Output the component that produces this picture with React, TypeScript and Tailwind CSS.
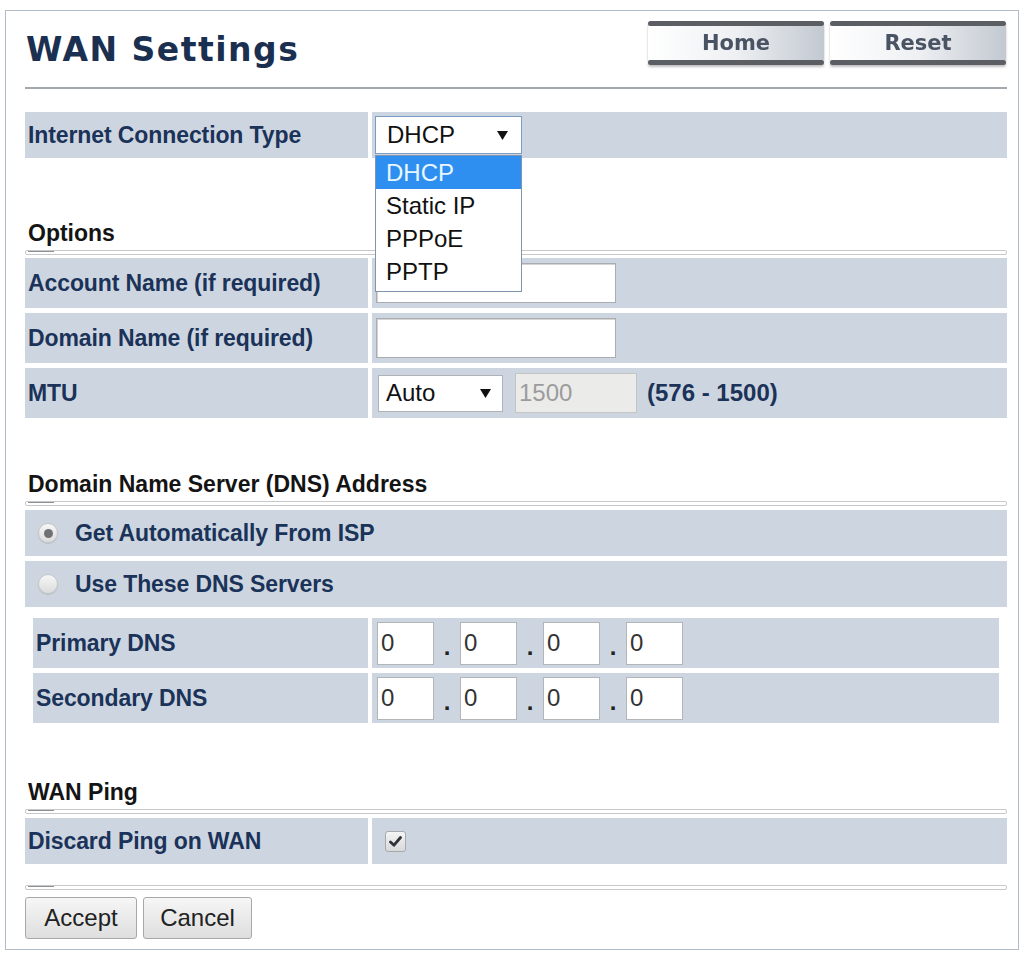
import React from "react";

const LABEL = "text-[23px] font-bold text-[#1b3259] leading-none tracking-[-0.1px]";
const CELL = "bg-[#cdd6e0]";

function Rule() {
  return (
    <div className="h-[5px] border border-[#c6c8ca] rounded-[2px] flex items-start">
      <div className="ml-[2px] w-[26px] h-px bg-[#8e9194]" />
    </div>
  );
}

function Heading({ text }: { text: string }) {
  return (
    <div className="h-[26px] leading-[26px] pl-[3px] text-[23px] font-bold text-[#141414]">{text}</div>
  );
}

function Row({ label, children, h = "h-[50px]" }: { label: string; children?: React.ReactNode; h?: string }) {
  return (
    <div className={`flex gap-[4px] ${h}`}>
      <div className={`w-[343px] shrink-0 ${CELL} flex items-center pl-[3px] ${LABEL}`}>{label}</div>
      <div className={`flex-1 ${CELL} flex items-center pl-[4px]`}>{children}</div>
    </div>
  );
}

function Arrow() {
  return (
    <svg width="11" height="9" viewBox="0 0 11 9">
      <polygon points="0,0 11,0 5.5,9" fill="#111" />
    </svg>
  );
}

function TextInput() {
  return <div className="w-[240px] h-[40px] bg-white border border-[#a9adb1] shadow-[inset_1px_1px_0_#d4d4d4]" />;
}

function Octet() {
  return (
    <div className="w-[57px] h-[43px] bg-white border border-[#b3b6b9] flex items-center pl-[3px] text-[24px] text-[#333] leading-none">
      0
    </div>
  );
}

function Dot() {
  return <div className="w-[26px] text-center text-[24px] font-bold text-[#222] leading-none pt-[8px]">.</div>;
}

function IpRow({ label }: { label: string }) {
  return (
    <div className="flex gap-[4px] h-[50px]">
      <div className={`w-[335px] shrink-0 ${CELL} flex items-center pl-[3px] ${LABEL}`}>{label}</div>
      <div className={`flex-1 ${CELL} flex items-center pl-[5px]`}>
        <Octet />
        <Dot />
        <Octet />
        <Dot />
        <Octet />
        <Dot />
        <Octet />
      </div>
    </div>
  );
}

function Radio({ checked }: { checked?: boolean }) {
  return (
    <div className="w-[20px] h-[20px] rounded-full border border-[#c4c7ca] bg-gradient-to-b from-[#f7f7f7] to-[#dcdcdc] shadow-[0_1px_1px_rgba(0,0,0,0.12)] flex items-center justify-center">
      {checked && <div className="w-[9px] h-[9px] rounded-full bg-[#6f7174]" />}
    </div>
  );
}

function RadioRow({ label, checked, h }: { label: string; checked?: boolean; h: string }) {
  return (
    <div className={`${h} ${CELL} flex items-center pl-[13px]`}>
      <Radio checked={checked} />
      <span className={`ml-[17px] ${LABEL}`}>{label}</span>
    </div>
  );
}

function TopButton({ text }: { text: string }) {
  return (
    <div className="w-[176px] h-[44px] flex flex-col drop-shadow-[0_2px_1px_rgba(0,0,0,0.25)]">
      <div className="h-[5px] rounded-full bg-[#5b5f64]" />
      <div
        className="flex-1 bg-gradient-to-r from-[#ffffff] via-[#eef0f3] to-[#c3c9d1] flex items-center justify-center text-[21px] font-bold text-[#4a5363] pt-[2px]"
        style={{ fontFamily: '"DejaVu Sans", Verdana, sans-serif' }}
      >
        {text}
      </div>
      <div className="h-[5px] rounded-full bg-[#5b5f64]" />
    </div>
  );
}

function FormButton({ text, w }: { text: string; w: string }) {
  return (
    <div
      className={`${w} h-[42px] rounded-[3px] border border-[#a8a8a8] bg-gradient-to-b from-[#f6f6f6] to-[#dedede] flex items-center justify-center text-[24px] text-[#222]`}
    >
      {text}
    </div>
  );
}

export default function App() {
  return (
    <div
      className="w-[1026px] h-[954px] bg-white pt-[10px] pl-[5px]"
      style={{ fontFamily: '"Liberation Sans", Arial, sans-serif' }}
    >
      <div className="w-[1014px] border border-[#aebbc8] pl-[19px] pr-[11px] pb-[10px]">
        {/* Header */}
        <div className="pt-[10px] flex justify-between items-start">
          <div
            className="mt-[10px] pl-[1px] leading-[38px] text-[33px] font-bold text-[#1b2f50] tracking-[1.5px]"
            style={{ fontFamily: '"DejaVu Sans", Verdana, sans-serif' }}
          >
            WAN Settings
          </div>
          <div className="flex gap-[6px] pr-[1px]">
            <TopButton text="Home" />
            <TopButton text="Reset" />
          </div>
        </div>
        <div className="mt-[18px] h-[2px] bg-[#a3a8ad]" />

        {/* Internet Connection Type */}
        <div className="mt-[23px] flex gap-[4px] h-[46px]">
          <div className={`w-[343px] shrink-0 ${CELL} flex items-center pl-[3px] ${LABEL}`}>Internet Connection Type</div>
          <div className={`flex-1 ${CELL} flex items-center pl-[3px]`}>
            <div className="relative">
              <div className="w-[147px] h-[38px] bg-white border border-[#7c9cc4] flex items-center justify-between pl-[11px] pr-[13px] text-[24px] text-[#111] leading-none">
                <span>DHCP</span>
                <Arrow />
              </div>
              <div className="absolute left-0 top-[39px] w-[147px] bg-white border border-[#8094b0] pb-[3px] z-10">
                <div className="h-[33px] bg-[#2f8ff0] text-[#e8f7ff] text-[24px] leading-[33px] pl-[10px]">DHCP</div>
                <div className="h-[33px] text-[#111] text-[24px] leading-[33px] pl-[10px]">Static IP</div>
                <div className="h-[33px] text-[#111] text-[24px] leading-[33px] pl-[10px]">PPPoE</div>
                <div className="h-[33px] text-[#111] text-[24px] leading-[33px] pl-[10px]">PPTP</div>
              </div>
            </div>
          </div>
        </div>

        {/* Options */}
        <div className="mt-[62px]">
          <Heading text="Options" />
          <div className="mt-[4px]">
            <Rule />
          </div>
          <div className="mt-[3px] flex flex-col gap-[5px]">
            <Row label="Account Name (if required)">
              <TextInput />
            </Row>
            <Row label="Domain Name (if required)">
              <TextInput />
            </Row>
            <Row label="MTU">
              <div className="ml-[2px] w-[125px] h-[37px] bg-white border border-[#b0b3b6] flex items-center justify-between pl-[7px] pr-[11px] text-[24px] text-[#111] leading-none">
                <span>Auto</span>
                <Arrow />
              </div>
              <div className="ml-[12px] w-[122px] h-[40px] bg-[#ebebea] border border-[#c2c4c6] flex items-center pl-[3px] text-[24px] text-[#9c9c9c] leading-none">
                1500
              </div>
              <span className="ml-[10px] text-[24px] font-bold text-[#1b3259] leading-none">(576 - 1500)</span>
            </Row>
          </div>
        </div>

        {/* DNS */}
        <div className="mt-[53px]">
          <Heading text="Domain Name Server (DNS) Address" />
          <div className="mt-[4px]">
            <Rule />
          </div>
          <div className="mt-[4px] flex flex-col gap-[5px]">
            <RadioRow label="Get Automatically From ISP" checked h="h-[46px]" />
            <RadioRow label="Use These DNS Servers" h="h-[46px]" />
          </div>
          <div className="mt-[11px] mx-[8px] flex flex-col gap-[5px]">
            <IpRow label="Primary DNS" />
            <IpRow label="Secondary DNS" />
          </div>
        </div>

        {/* WAN Ping */}
        <div className="mt-[56px]">
          <Heading text="WAN Ping" />
          <div className="mt-[4px]">
            <Rule />
          </div>
          <div className="mt-[4px]">
            <Row label="Discard Ping on WAN" h="h-[46px]">
              <div className="ml-[9px] w-[21px] h-[21px] rounded-[3px] border border-[#a7aaad] bg-gradient-to-b from-[#f5f5f5] to-[#d9d9d9] flex items-center justify-center">
                <svg width="13" height="11" viewBox="0 0 13 11">
                  <path d="M1.5 6 L5 9.2 L11.5 1.5" fill="none" stroke="#2f3236" strokeWidth="2.8" strokeLinecap="round" strokeLinejoin="round" />
                </svg>
              </div>
            </Row>
          </div>
        </div>

        <div className="mt-[21px]">
          <Rule />
        </div>
        <div className="mt-[7px] flex gap-[6px]">
          <FormButton text="Accept" w="w-[112px]" />
          <FormButton text="Cancel" w="w-[109px]" />
        </div>
      </div>
    </div>
  );
}
